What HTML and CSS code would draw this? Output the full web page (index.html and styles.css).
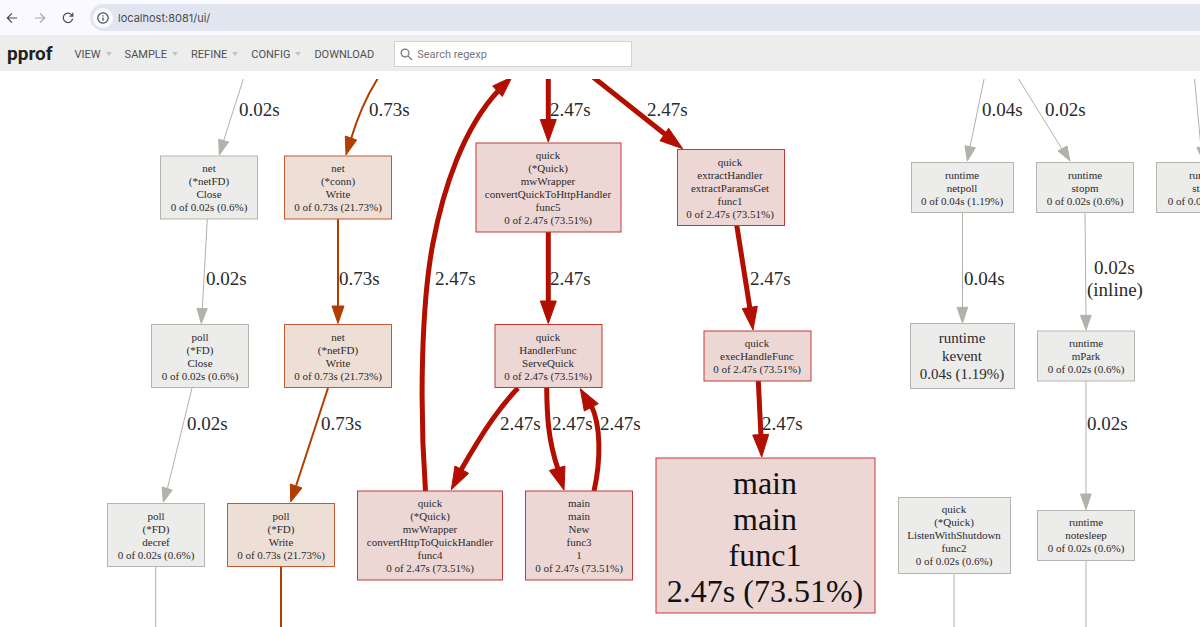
FILE: index.html
```
<!DOCTYPE html>
<html lang="en">
<head>
<meta charset="utf-8">
<title>pprof</title>
<link rel="stylesheet" href="styles.css">
</head>
<body>
<div class="browser-bar">
  <button class="nav-button" aria-label="Back"><svg width="12" height="12" viewBox="0 0 12 12"><path d="M11 6H1.5M6 1.3L1.3 6L6 10.7"/></svg></button>
  <button class="nav-button nav-button-off" aria-label="Forward" disabled><svg width="12" height="12" viewBox="0 0 12 12"><path d="M1 6H10.5M6 1.3L10.7 6L6 10.7"/></svg></button>
  <button class="nav-button" aria-label="Reload"><svg width="12" height="12" viewBox="0 0 12 12"><path d="M10.6 6.6A4.7 4.7 0 1 1 9.4 2.6L10.6 4M10.8 0.8V4.2H7.4"/></svg></button>
  <div class="address">
    <button class="site-info" aria-label="Site information"><svg width="12" height="12" viewBox="0 0 12 12"><circle cx="6" cy="6" r="5.2"/><path d="M6 5.4V8.8M6 3.2V4.4"/></svg></button>
    <input class="address-input" type="text" value="localhost:8081/ui/" aria-label="Address">
  </div>
</div>
<header class="toolbar">
  <h1 class="brand">pprof</h1>
  <nav class="menu">
    <button class="menu-item">VIEW<span class="caret"></span></button>
    <button class="menu-item">SAMPLE<span class="caret"></span></button>
    <button class="menu-item">REFINE<span class="caret"></span></button>
    <button class="menu-item">CONFIG<span class="caret"></span></button>
    <a class="menu-item" href="#download">DOWNLOAD</a>
  </nav>
  <label class="search">
    <svg width="13" height="13" viewBox="0 0 13 13"><circle cx="5" cy="5" r="3.9"/><path d="M7.9 7.9L12 12"/></svg>
    <input class="search-input" type="text" placeholder="Search regexp" aria-label="Search regexp">
  </label>
</header>
<main class="graph-area">
<svg class="graph" role="img" aria-label="Call graph">
<g transform="translate(0 -79)">
  <g class="edge gray">
    <path d="M243.7 78L223.5 141"/><polygon points="218.7,139.3 228.7,142 219.3,155"/>
    <path d="M207.3 219L202.3 309"/><polygon points="197,308.3 207.3,308.7 201.3,323.5"/>
    <path d="M192 388L167.3 489"/><polygon points="162,487 172.3,490 163.3,502"/>
    <path d="M155.7 567V1000"/>
    <path d="M984.3 78L970 147"/><polygon points="965,145.7 975.3,147.7 967.3,161"/>
    <path d="M1018 78L1062 149"/><polygon points="1058,151 1067,146 1070,161"/>
    <path d="M1194.5 78L1201 148"/><polygon points="1197,147.5 1207,146.5 1203,161"/>
    <path d="M962.5 213V308"/><polygon points="957,307.3 967.7,307.3 962.5,323"/>
    <path d="M1085 213L1086 316"/><polygon points="1080.5,315.3 1091.2,315.3 1086,330"/>
    <path d="M1086 381V495"/><polygon points="1080.5,494 1091.2,494 1086,509.5"/>
    <path d="M1086 560V1000"/>
    <path d="M954 573V1000"/>
  </g>
  <g class="edge orange">
    <path d="M378 78C368 94 359 112 351 139"/><polygon points="345.3,136 356.7,140 346,155"/>
    <path d="M338 219V307"/><polygon points="332,306 344,306 338,323.5"/>
    <path d="M328 388L296 486"/><polygon points="290.3,484 302,488 290.7,502"/>
    <path d="M281 567V1000"/>
  </g>
  <g class="edge red">
    <path d="M425.5 491C419 400 422 300 433 243C443 190 463 128 499 90"/><polygon points="492.7,86 502.3,96.5 512,77"/>
    <path d="M548.3 78V121"/><polygon points="540.3,119.5 556.3,119.5 548.3,142"/>
    <path d="M593 77L666 135"/><polygon points="668.7,128.3 660,140.8 682.7,148.7"/>
    <path d="M548.3 232V302"/><polygon points="540.3,301 556.3,301 548.3,323.5"/>
    <path d="M736.7 225L750 309"/><polygon points="742.3,308.7 757.3,306.3 753,330"/>
    <path d="M518 388C500 407 485 428 461 470"/><polygon points="455,466 468.7,473.3 451.3,489.7"/>
    <path d="M546.7 388C547 415 548 440 558 469"/><polygon points="549.3,470.5 565,466 564,490"/>
    <path d="M594 491C601 460 601 425 591 405"/><polygon points="584.3,411 598.3,403.7 580.3,388.7"/>
    <path d="M758.3 381L761 436"/><polygon points="752.7,435 768.7,434.3 761.7,457"/>
  </g>
  <g class="edge-label">
    <text x="239" y="116">0.02s</text>
    <text x="369" y="116">0.73s</text>
    <text x="550" y="116">2.47s</text>
    <text x="647" y="116">2.47s</text>
    <text x="982" y="116">0.04s</text>
    <text x="1045" y="116">0.02s</text>
    <text x="206" y="285">0.02s</text>
    <text x="339" y="285">0.73s</text>
    <text x="435" y="285">2.47s</text>
    <text x="550" y="285">2.47s</text>
    <text x="750" y="285">2.47s</text>
    <text x="964" y="285">0.04s</text>
    <text x="1094" y="274">0.02s<tspan x="1087" dy="22">(inline)</tspan></text>
    <text x="187" y="430">0.02s</text>
    <text x="321" y="430">0.73s</text>
    <text x="500" y="430">2.47s</text>
    <text x="552" y="430">2.47s</text>
    <text x="600" y="430">2.47s</text>
    <text x="762" y="430">2.47s</text>
    <text x="1087" y="430">0.02s</text>
  </g>
  <g class="node gray">
    <rect x="160.5" y="156" width="97" height="63"/>
    <text x="209" y="172">net<tspan x="209" dy="13">(*netFD)</tspan><tspan x="209" dy="13">Close</tspan><tspan x="209" dy="13">0 of 0.02s (0.6%)</tspan></text>
    <rect x="151.5" y="324.5" width="97" height="63"/>
    <text x="200" y="341">poll<tspan x="200" dy="13">(*FD)</tspan><tspan x="200" dy="13">Close</tspan><tspan x="200" dy="13">0 of 0.02s (0.6%)</tspan></text>
    <rect x="107.5" y="503.5" width="97" height="63"/>
    <text x="156" y="520">poll<tspan x="156" dy="13">(*FD)</tspan><tspan x="156" dy="13">decref</tspan><tspan x="156" dy="13">0 of 0.02s (0.6%)</tspan></text>
    <rect x="911.5" y="162.5" width="102" height="50"/>
    <text x="962" y="179">runtime<tspan x="962" dy="13">netpoll</tspan><tspan x="962" dy="13">0 of 0.04s (1.19%)</tspan></text>
    <rect x="1036.5" y="162.5" width="97" height="50"/>
    <text x="1085" y="179">runtime<tspan x="1085" dy="13">stopm</tspan><tspan x="1085" dy="13">0 of 0.02s (0.6%)</tspan></text>
    <rect x="1156.5" y="162.5" width="97" height="50"/>
    <text x="1206" y="179">runtime<tspan x="1206" dy="13">startm</tspan><tspan x="1206" dy="13">0 of 0.02s (0.6%)</tspan></text>
    <rect x="910.5" y="323.5" width="104" height="65"/>
    <text class="medium" x="962" y="343">runtime<tspan x="962" dy="18">kevent</tspan><tspan x="962" dy="18">0.04s (1.19%)</tspan></text>
    <rect x="1037.5" y="331" width="97" height="50"/>
    <text x="1086" y="347">runtime<tspan x="1086" dy="13">mPark</tspan><tspan x="1086" dy="13">0 of 0.02s (0.6%)</tspan></text>
    <rect x="898.5" y="497.5" width="112" height="76"/>
    <text x="954" y="513">quick<tspan x="954" dy="13">(*Quick)</tspan><tspan x="954" dy="13">ListenWithShutdown</tspan><tspan x="954" dy="13">func2</tspan><tspan x="954" dy="13">0 of 0.02s (0.6%)</tspan></text>
    <rect x="1037.5" y="510.5" width="97" height="50"/>
    <text x="1086" y="526">runtime<tspan x="1086" dy="13">notesleep</tspan><tspan x="1086" dy="13">0 of 0.02s (0.6%)</tspan></text>
  </g>
  <g class="node orange">
    <rect x="284.5" y="156" width="107" height="63"/>
    <text x="338" y="172">net<tspan x="338" dy="13">(*conn)</tspan><tspan x="338" dy="13">Write</tspan><tspan x="338" dy="13">0 of 0.73s (21.73%)</tspan></text>
    <rect x="284.5" y="324.5" width="107" height="63"/>
    <text x="338" y="341">net<tspan x="338" dy="13">(*netFD)</tspan><tspan x="338" dy="13">Write</tspan><tspan x="338" dy="13">0 of 0.73s (21.73%)</tspan></text>
    <rect x="227.5" y="503.5" width="107" height="63"/>
    <text x="281" y="520">poll<tspan x="281" dy="13">(*FD)</tspan><tspan x="281" dy="13">Write</tspan><tspan x="281" dy="13">0 of 0.73s (21.73%)</tspan></text>
  </g>
  <g class="node red">
    <rect x="476" y="143" width="145" height="89"/>
    <text x="548" y="159">quick<tspan x="548" dy="13">(*Quick)</tspan><tspan x="548" dy="13">mwWrapper</tspan><tspan x="548" dy="13">convertQuickToHttpHandler</tspan><tspan x="548" dy="13">func5</tspan><tspan x="548" dy="13">0 of 2.47s (73.51%)</tspan></text>
    <rect x="677.5" y="149.5" width="107" height="76"/>
    <text x="730" y="166">quick<tspan x="730" dy="13">extractHandler</tspan><tspan x="730" dy="13">extractParamsGet</tspan><tspan x="730" dy="13">func1</tspan><tspan x="730" dy="13">0 of 2.47s (73.51%)</tspan></text>
    <rect x="495" y="324.5" width="107" height="63"/>
    <text x="548" y="341">quick<tspan x="548" dy="13">HandlerFunc</tspan><tspan x="548" dy="13">ServeQuick</tspan><tspan x="548" dy="13">0 of 2.47s (73.51%)</tspan></text>
    <rect x="704" y="331" width="107" height="50"/>
    <text x="757" y="347">quick<tspan x="757" dy="13">execHandleFunc</tspan><tspan x="757" dy="13">0 of 2.47s (73.51%)</tspan></text>
    <rect x="357.5" y="491" width="145" height="89"/>
    <text x="430" y="507">quick<tspan x="430" dy="13">(*Quick)</tspan><tspan x="430" dy="13">mwWrapper</tspan><tspan x="430" dy="13">convertHttpToQuickHandler</tspan><tspan x="430" dy="13">func4</tspan><tspan x="430" dy="13">0 of 2.47s (73.51%)</tspan></text>
    <rect x="525.5" y="491" width="107" height="89"/>
    <text x="579" y="507">main<tspan x="579" dy="13">main</tspan><tspan x="579" dy="13">New</tspan><tspan x="579" dy="13">func3</tspan><tspan x="579" dy="13">1</tspan><tspan x="579" dy="13">0 of 2.47s (73.51%)</tspan></text>
    <rect x="656" y="458" width="219" height="155"/>
    <text class="large" x="765" y="494">main<tspan x="765" dy="36">main</tspan><tspan x="765" dy="36">func1</tspan><tspan x="765" dy="36">2.47s (73.51%)</tspan></text>
  </g>
</g>
</svg>
</main>
</body>
</html>
```
FILE: styles.css
```
* { box-sizing: border-box; }

body {
  margin: 0;
  height: 100vh;
  display: flex;
  flex-direction: column;
  overflow: hidden;
  background: #fff;
  font-family: Roboto, "Liberation Sans", sans-serif;
}

button, input {
  border: 0;
  padding: 0;
  background: none;
  font: inherit;
  color: inherit;
}

.browser-bar {
  display: flex;
  align-items: center;
  gap: 16px;
  height: 35px;
  padding-left: 6px;
  background: #faf9ff;
}

.nav-button {
  display: flex;
  width: 12px;
  color: #474b57;
}

.nav-button-off { color: #a5a6ad; }

.browser-bar svg,
.search svg {
  flex: none;
  fill: none;
  stroke: currentColor;
  stroke-width: 1.2;
}

.address {
  flex: 1;
  display: flex;
  align-items: center;
  gap: 5px;
  height: 27px;
  padding-left: 3px;
  border-radius: 14px 0 0 14px;
  background: #e1e5f0;
}

.site-info {
  display: flex;
  align-items: center;
  justify-content: center;
  width: 20px;
  height: 20px;
  border-radius: 50%;
  background: #fbfbff;
  color: #45474c;
}

.address-input {
  flex: 1;
  font-family: Inter, sans-serif;
  font-size: 11px;
  color: #4a4c52;
}

.toolbar {
  display: flex;
  align-items: center;
  height: 36px;
  padding: 2px 0 0 7px;
  background: #ededed;
}

.brand {
  margin: 0 22px 0 0;
  font-size: 19px;
  line-height: 32px;
  font-weight: 700;
  color: #212121;
}

.menu {
  display: flex;
  gap: 13px;
}

.menu-item {
  display: flex;
  align-items: center;
  gap: 5px;
  font-size: 11px;
  color: #505050;
  text-decoration: none;
}

.caret {
  border: 3px solid transparent;
  border-top: 4px solid #c4c4c4;
  border-bottom: 0;
}

.search {
  display: flex;
  align-items: center;
  gap: 4px;
  width: 238px;
  height: 26px;
  margin-left: 20px;
  padding: 0 5px;
  border: 1px solid #d2d2d2;
  background: #fff;
  color: #777;
}

.search-input {
  flex: 1;
  min-width: 0;
  font-size: 11px;
}

.search-input::placeholder { color: #777; }

.graph-area {
  flex: 1;
  min-height: 0;
  padding-top: 8px;
}

.graph {
  display: block;
  width: 100%;
  height: 100%;
  overflow: hidden;
  font-family: "Liberation Serif", serif;
  fill: #2b2b2b;
}

.edge path { fill: none; }
.edge.gray { stroke: #b2b1aa; }
.edge.orange { stroke: #b23d00; }
.edge.red { stroke: #b20f00; }
.edge.gray polygon { fill: #b2b1aa; }
.edge.orange polygon { fill: #b23d00; }
.edge.red polygon { fill: #b20f00; }
.edge.orange path { stroke-width: 2; }
.edge.red path { stroke-width: 5; }

.edge-label { font-size: 19px; }

.node text {
  font-size: 11px;
  text-anchor: middle;
}

.node .medium { font-size: 15px; }
.node .large { font-size: 32px; fill: #111; }

.node.gray rect { fill: #ececeb; stroke: #b5b4ae; }
.node.orange rect { fill: #eddfd6; stroke: #c05a30; }
.node.red rect { fill: #edd7d5; stroke: #c23a38; }
```
